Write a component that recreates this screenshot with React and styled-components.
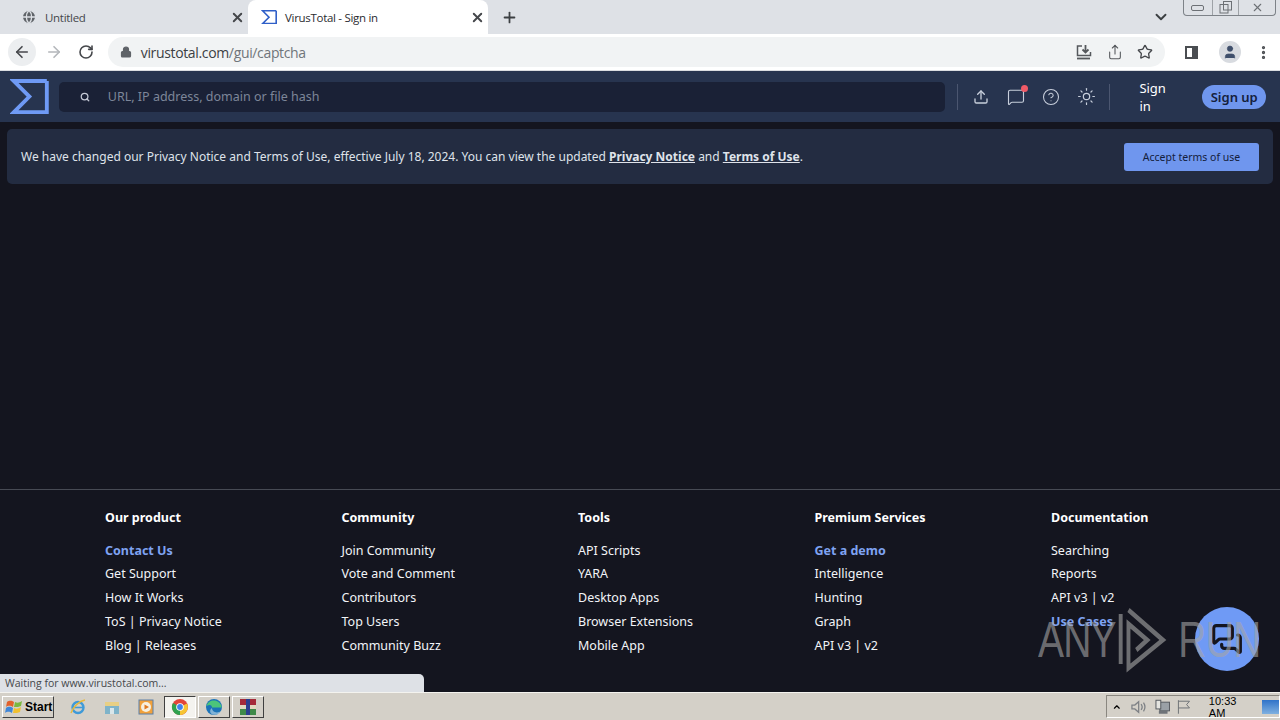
import React from "react";
import styled, { createGlobalStyle } from "styled-components";
import {
  ArrowLeft,
  ArrowRight,
  RotateCw,
  Lock,
  Globe,
  X,
  Plus,
  ChevronDown,
  Star,
  MoreVertical,
  User,
  Search,
  Upload,
  MessageSquare,
  HelpCircle,
  Sun,
  Share,
  MessagesSquare,
} from "lucide-react";

const GlobalStyle = createGlobalStyle`
  html, body {
    margin: 0;
    padding: 0;
    width: 1280px;
    height: 720px;
    overflow: hidden;
    background: #14151f;
  }
  * { box-sizing: border-box; }
`;

const Screen = styled.div`
  position: relative;
  width: 1280px;
  height: 720px;
  display: flex;
  flex-direction: column;
  overflow: hidden;
  font-family: "Noto Sans", sans-serif;
`;

/* browser chrome */
const TabBar = styled.div`
  height: 34px;
  flex: none;
  background: #dee1e6;
  display: flex;
  align-items: flex-end;
  padding-left: 8px;
  position: relative;
`;
const Tab = styled.div`
  width: 240px;
  height: 34px;
  display: flex;
  align-items: center;
  padding: 0 3px 0 13px;
  gap: 8px;
  font-family: "Open Sans", sans-serif;
  font-size: 11.5px;
  letter-spacing: -0.3px;
  color: ${(p) => (p.$active ? "#2b2c30" : "#45474b")};
  background: ${(p) => (p.$active ? "#ffffff" : "transparent")};
  border-radius: 8px 8px 0 0;
  margin-right: ${(p) => (p.$active ? "6px" : "0")};
`;
const TabTitle = styled.span`
  flex: 1;
`;
const NewTab = styled.div`
  width: 30px;
  height: 34px;
  display: flex;
  align-items: center;
  justify-content: center;
  color: #3c4043;
`;
const TabListButton = styled.div`
  position: absolute;
  left: 1152px;
  top: 8px;
  color: #3c4043;
`;
const WindowButtons = styled.div`
  position: absolute;
  left: 1183px;
  top: 0;
  width: 93px;
  height: 16px;
  display: flex;
  border: 1px solid #7d8288;
  border-top: none;
  border-radius: 0 0 4px 4px;
  color: #6c7075;
`;
const WindowButton = styled.div`
  flex: ${(p) => p.$flex || 1};
  display: flex;
  align-items: center;
  justify-content: center;
  & + & {
    border-left: 1px solid #9ea2a7;
  }
`;
const Toolbar = styled.div`
  height: 37px;
  flex: none;
  background: #ffffff;
  display: flex;
  align-items: center;
  padding: 0 8px;
  border-bottom: 1px solid #dadce0;
`;
const NavButton = styled.div`
  width: 28px;
  height: 28px;
  border-radius: 50%;
  display: flex;
  align-items: center;
  justify-content: center;
  margin-right: 4px;
  background: ${(p) => (p.$hover ? "#eceef0" : "transparent")};
  color: ${(p) => p.$color || "#5f6368"};
`;
const Omnibox = styled.div`
  margin-left: 4px;
  width: 1060px;
  height: 30px;
  border-radius: 15px;
  background: #f1f3f4;
  display: flex;
  align-items: center;
  padding: 0 12px 0 12px;
  color: #5f6368;
`;
const Url = styled.span`
  margin-left: 9px;
  flex: 1;
  font-family: "Open Sans", sans-serif;
  font-size: 14px;
  letter-spacing: -0.35px;
  color: #3c4043;
`;
const UrlMuted = styled.span`
  color: #70757a;
`;
const OmniIcons = styled.div`
  display: flex;
  align-items: center;
  gap: 14px;
`;
const SideIcon = styled.div`
  width: 13px;
  height: 13px;
  margin-left: 20px;
  border: 2px solid #4a4d51;
  border-right-width: 6px;
`;
const Avatar = styled.div`
  width: 22px;
  height: 22px;
  margin-left: 21px;
  border-radius: 50%;
  background: #d8dbe0;
  display: flex;
  align-items: center;
  justify-content: center;
  color: #3f4f6b;
`;
const Kebab = styled.div`
  margin-left: 14px;
  color: #4a4d51;
  display: flex;
`;

/* VirusTotal header */
const TopNav = styled.header`
  height: 51px;
  flex: none;
  background: #27344f;
  display: flex;
  align-items: center;
  padding: 0 14px 0 10px;
`;
const SearchBox = styled.div`
  margin-left: 10px;
  width: 892px;
  height: 30px;
  background: #1a2136;
  border-radius: 5px;
  display: flex;
  align-items: center;
  padding-left: 21px;
  gap: 18px;
  color: #c5cad6;
`;
const SearchHint = styled.span`
  font-size: 12.5px;
  color: #7d8699;
`;
const Divider = styled.div`
  width: 1px;
  height: 26px;
  background: #4b5670;
`;
const NavIcons = styled.div`
  display: flex;
  align-items: center;
  gap: 15px;
  padding: 0 13px 0 13px;
  color: #c8cfdc;
`;
const IconWrap = styled.div`
  position: relative;
  width: 20px;
  height: 20px;
  display: flex;
  align-items: center;
  justify-content: center;
`;
const Dot = styled.span`
  position: absolute;
  right: -2px;
  top: -2px;
  width: 7px;
  height: 7px;
  border-radius: 50%;
  background: #ef5a67;
`;
const SignIn = styled.span`
  margin-left: 29px;
  font-size: 13px;
  color: #ffffff;
`;
const SignUp = styled.span`
  margin-left: 22px;
  width: 64px;
  height: 24px;
  border-radius: 12px;
  background: #6f96ee;
  color: #14203c;
  font-size: 13px;
  font-weight: 600;
  display: flex;
  align-items: center;
  justify-content: center;
`;

/* page */
const Page = styled.main`
  flex: 1;
  min-height: 0;
  background: #14151f;
  display: flex;
  flex-direction: column;
  padding-top: 7px;
`;
const Notice = styled.div`
  margin: 0 7px 0 7px;
  height: 55px;
  flex: none;
  border-radius: 5px;
  background: #232c41;
  display: flex;
  align-items: center;
  justify-content: space-between;
  padding: 0 14px;
  font-size: 12px;
  color: #dfe3ea;
`;
const NoticeLink = styled.a`
  font-weight: 700;
  color: #dfe3ea;
  text-decoration: underline;
`;
const AcceptButton = styled.button`
  width: 135px;
  height: 28px;
  border: none;
  border-radius: 3px;
  background: #6f96ee;
  color: #14203c;
  font-family: inherit;
  font-size: 10.5px;
`;
const Spacer = styled.div`
  flex: 1;
`;
const Footer = styled.footer`
  height: 203px;
  flex: none;
  border-top: 1px solid #474a54;
  padding: 18px 0 0 105px;
  display: grid;
  grid-template-columns: repeat(5, 236.5px);
  color: #ffffff;
`;
const Column = styled.div`
  display: flex;
  flex-direction: column;
`;
const ColumnTitle = styled.div`
  font-size: 12.5px;
  font-weight: 700;
  line-height: 20px;
  margin-bottom: 10.5px;
`;
const FooterLink = styled.div`
  font-size: 12.5px;
  line-height: 23.8px;
  white-space: nowrap;
  font-weight: ${(p) => (p.$accent ? 700 : 400)};
  color: ${(p) => (p.$accent ? "#7fa3f2" : "#f2f4f7")};
`;

/* overlays */
const StatusBubble = styled.div`
  position: absolute;
  left: 0;
  top: 674px;
  width: 424px;
  height: 18px;
  background: #dee1e6;
  border-radius: 0 5px 0 0;
  padding-left: 5px;
  font-family: "Open Sans", sans-serif;
  font-size: 10.5px;
  line-height: 18px;
  color: #45474b;
`;
const ChatButton = styled.div`
  position: absolute;
  left: 1195px;
  top: 607px;
  width: 64px;
  height: 64px;
  border-radius: 50%;
  background: #6f9af5;
  display: flex;
  align-items: center;
  justify-content: center;
  color: #14151f;
`;
const Watermark = styled.div`
  position: absolute;
  left: 1038px;
  top: 610px;
  height: 60px;
  display: flex;
  align-items: center;
  font-family: "Liberation Sans", sans-serif;
  font-size: 50px;
  letter-spacing: -1px;
  color: rgba(165, 165, 165, 0.62);
  transform: scaleX(0.78);
  transform-origin: left center;
  pointer-events: none;
  white-space: nowrap;
`;
const WatermarkWord = styled.span``;

/* windows taskbar */
const Taskbar = styled.div`
  height: 28px;
  flex: none;
  background: #d4d0c8;
  border-top: 1px solid #f4f3ef;
  display: flex;
  align-items: center;
  padding-left: 2px;
  font-family: "Liberation Sans", sans-serif;
`;
const StartButton = styled.div`
  width: 52px;
  height: 22px;
  display: flex;
  align-items: center;
  gap: 2px;
  padding-left: 2px;
  border: 1px solid;
  border-color: #ffffff #404040 #404040 #ffffff;
  font-size: 12px;
  font-weight: 700;
  color: #000000;
`;
const Apps = styled.div`
  margin-left: 8px;
  display: flex;
  align-items: center;
  gap: 2px;
`;
const AppSlot = styled.div`
  width: 32px;
  height: 22px;
  display: flex;
  align-items: center;
  justify-content: center;
  border: ${(p) => (p.$raised ? "1px solid" : "none")};
  border-color: ${(p) =>
    p.$pressed ? "#404040 #ffffff #ffffff #404040" : "#ffffff #404040 #404040 #ffffff"};
  background: ${(p) => (p.$pressed ? "#f4f3ef" : "transparent")};
`;
const Tray = styled.div`
  margin-left: auto;
  margin-right: 0;
  width: 174px;
  height: 23px;
  border: 1px solid;
  border-color: #8a8780 #ffffff #ffffff #8a8780;
  display: flex;
  align-items: center;
  padding-left: 5px;
  color: #55595f;
`;
const Clock = styled.span`
  margin-left: 17px;
  font-size: 11px;
  color: #000000;
`;
const ShowDesktop = styled.div`
  margin-left: 8px;
  width: 18px;
  height: 14px;
  background: linear-gradient(#2f73c9, #7fb0e0);
`;

const footerColumns = [
  { title: "Our product", links: [["Contact Us", true], ["Get Support"], ["How It Works"], ["ToS | Privacy Notice"], ["Blog | Releases"]] },
  { title: "Community", links: [["Join Community"], ["Vote and Comment"], ["Contributors"], ["Top Users"], ["Community Buzz"]] },
  { title: "Tools", links: [["API Scripts"], ["YARA"], ["Desktop Apps"], ["Browser Extensions"], ["Mobile App"]] },
  { title: "Premium Services", links: [["Get a demo", true], ["Intelligence"], ["Hunting"], ["Graph"], ["API v3 | v2"]] },
  { title: "Documentation", links: [["Searching"], ["Reports"], ["API v3 | v2"], ["Use Cases", true]] },
];

const Sigma = ({ size, color, width = 6 }) => (
  <svg width={size} height={size * 0.9} viewBox="0 0 40 36" fill="none">
    <path
      d="M38 2H4L20 18L4 34H38V2"
      stroke={color}
      strokeWidth={width * 0.66}
      strokeLinejoin="miter"
    />
  </svg>
);

const Ie = () => (
  <svg width="18" height="18" viewBox="0 0 18 18" fill="none">
    <circle cx="9" cy="9.5" r="5.5" stroke="#3f9ad8" strokeWidth="2.4" />
    <path d="M4 9.5h10" stroke="#3f9ad8" strokeWidth="1.6" />
    <path d="M2 15C4 9 10 3 16 2" stroke="#e8b93c" strokeWidth="1.4" />
  </svg>
);
const Folder = () => (
  <svg width="18" height="18" viewBox="0 0 18 18">
    <rect x="2" y="4" width="14" height="12" fill="#e8cf84" />
    <rect x="2" y="8" width="14" height="8" fill="#7fb3c9" />
    <rect x="7" y="10" width="4" height="6" fill="#d9e6ea" />
  </svg>
);
const Player = () => (
  <svg width="18" height="18" viewBox="0 0 18 18">
    <rect x="2" y="2" width="14" height="14" fill="#f2a13a" stroke="#5a7fa8" />
    <circle cx="9" cy="9" r="5" fill="#f7f0df" />
    <path d="M7.5 6.5L12 9L7.5 11.5Z" fill="#e0781f" />
  </svg>
);
const ChromeIcon = () => (
  <svg width="18" height="18" viewBox="0 0 18 18">
    <circle cx="9" cy="9" r="8" fill="#e2453a" />
    <path d="M9 9L16 5.5A8 8 0 0 1 9 17Z" fill="#f6c533" />
    <path d="M9 9L9 17A8 8 0 0 1 2 5Z" fill="#2fa24f" />
    <circle cx="9" cy="9" r="3.8" fill="#ffffff" />
    <circle cx="9" cy="9" r="2.9" fill="#3f82ee" />
  </svg>
);
const EdgeIcon = () => (
  <svg width="18" height="18" viewBox="0 0 18 18">
    <circle cx="9" cy="9" r="8" fill="#1b73b8" />
    <path d="M1.5 8C3 1 15 0 16.8 9.5H7C7 7 5 6 1.5 8Z" fill="#4cc47a" />
    <path d="M7 10c0 4 5 6 9 3-2 4-7 5-10 2.500C4.500 14 5 11 7 10Z" fill="#e8f4f4" opacity="0.5" />
  </svg>
);
const WinRar = () => (
  <svg width="18" height="18" viewBox="0 0 18 18">
    <rect x="1" y="1" width="16" height="16" fill="#a52a3a" />
    <rect x="1" y="7" width="16" height="4" fill="#e2d8c0" />
    <rect x="1" y="11" width="16" height="6" fill="#3f8a4a" />
    <rect x="7" y="1" width="4" height="16" fill="#2c3f8f" />
  </svg>
);
const StartFlag = () => (
  <svg width="18" height="16" viewBox="0 0 18 16">
    <path d="M2 3C5 1 7 2 9 3L8 8C6 7 4 6 1 8Z" fill="#e2612b" />
    <path d="M10 3C12 4 14 4 17 2L16 7C14 8 12 8 9 8Z" fill="#7ab840" />
    <path d="M1 9C4 7 6 8 8 9L7 14C5 13 3 12 0 14Z" fill="#3f86d8" />
    <path d="M9 9C11 10 13 10 16 8L15 13C13 14 11 14 8 14Z" fill="#f0c030" />
  </svg>
);

function App() {
  return (
    <Screen>
      <GlobalStyle />
      <TabBar>
        <Tab>
          <Globe size={16} color="#5f6368" fill="#5f6368" stroke="#dee1e6" />
          <TabTitle>Untitled</TabTitle>
          <X size={15} color="#45474b" strokeWidth={3} />
        </Tab>
        <Tab $active>
          <Sigma size={16} color="#2f5fc8" />
          <TabTitle>VirusTotal - Sign in</TabTitle>
          <X size={15} color="#45474b" strokeWidth={3} />
        </Tab>
        <NewTab>
          <Plus size={17} strokeWidth={2.5} />
        </NewTab>
        <TabListButton>
          <ChevronDown size={18} strokeWidth={2.5} />
        </TabListButton>
        <WindowButtons>
          <WindowButton $flex={1.1}>
            <svg width="13" height="6" viewBox="0 0 13 6" fill="none">
              <rect x="0.5" y="0.5" width="12" height="5" rx="1.5" stroke="#6c7075" />
            </svg>
          </WindowButton>
          <WindowButton $flex={1}>
            <svg width="14" height="13" viewBox="0 0 14 13" fill="none" stroke="#6c7075">
              <rect x="1" y="3.500" width="8" height="8.500" />
              <rect x="4.500" y="0.500" width="8" height="8.500" />
            </svg>
          </WindowButton>
          <WindowButton $flex={1.4}>
            <X size={13} strokeWidth={2} />
          </WindowButton>
        </WindowButtons>
      </TabBar>
      <Toolbar>
        <NavButton $hover $color="#45474b">
          <ArrowLeft size={18} strokeWidth={2.2} />
        </NavButton>
        <NavButton $color="#b4b7bb">
          <ArrowRight size={18} strokeWidth={2.2} />
        </NavButton>
        <NavButton $color="#45474b">
          <RotateCw size={16} strokeWidth={2.4} />
        </NavButton>
        <Omnibox>
          <Lock size={12} fill="#5f6368" strokeWidth={2.4} />
          <Url>
            virustotal.com<UrlMuted>/gui/captcha</UrlMuted>
          </Url>
          <OmniIcons>
            <svg width="18" height="18" viewBox="0 0 18 18" fill="none" stroke="#55585c" strokeWidth="1.5">
              <path d="M7 3H2.500V12.500H15.500V9" />
              <path d="M10.500 2V9M7.500 6.500L10.500 9.500L13.500 6.500" strokeWidth="1.800" />
              <path d="M2 15.500H15" strokeWidth="1.800" />
            </svg>
            <Share size={16} color="#55585c" strokeWidth={1.6} />
            <Star size={16} color="#45474b" strokeWidth={2} />
          </OmniIcons>
        </Omnibox>
        <SideIcon />
        <Avatar>
          <User size={16} fill="#3f4f6b" strokeWidth={1} />
        </Avatar>
        <Kebab>
          <MoreVertical size={17} strokeWidth={2.6} />
        </Kebab>
      </Toolbar>
      <TopNav>
        <Sigma size={39} color="#6f9af5" width={6} />
        <SearchBox>
          <Search size={10} strokeWidth={3} />
          <SearchHint>URL, IP address, domain or file hash</SearchHint>
        </SearchBox>
        <Divider style={{ marginLeft: 12 }} />
        <NavIcons>
          <IconWrap>
            <Upload size={16} />
          </IconWrap>
          <IconWrap>
            <MessageSquare size={18} strokeWidth={1.5} />
            <Dot />
          </IconWrap>
          <IconWrap>
            <HelpCircle size={18} strokeWidth={1.4} />
          </IconWrap>
          <IconWrap>
            <Sun size={19} strokeWidth={1.5} />
          </IconWrap>
        </NavIcons>
        <Divider />
        <SignIn>Sign in</SignIn>
        <SignUp>Sign up</SignUp>
      </TopNav>
      <Page>
        <Notice>
          <span>
            We have changed our Privacy Notice and Terms of Use, effective July 18, 2024. You can view the updated{" "}
            <NoticeLink>Privacy Notice</NoticeLink> and <NoticeLink>Terms of Use</NoticeLink>.
          </span>
          <AcceptButton>Accept terms of use</AcceptButton>
        </Notice>
        <Spacer />
        <Footer>
          {footerColumns.map((col) => (
            <Column key={col.title}>
              <ColumnTitle>{col.title}</ColumnTitle>
              {col.links.map(([label, accent]) => (
                <FooterLink key={label} $accent={accent}>
                  {label}
                </FooterLink>
              ))}
            </Column>
          ))}
        </Footer>
      </Page>
      <Taskbar>
        <StartButton>
          <StartFlag />
          Start
        </StartButton>
        <Apps>
          <AppSlot><Ie /></AppSlot>
          <AppSlot><Folder /></AppSlot>
          <AppSlot><Player /></AppSlot>
          <AppSlot $raised $pressed><ChromeIcon /></AppSlot>
          <AppSlot $raised><EdgeIcon /></AppSlot>
          <AppSlot $raised><WinRar /></AppSlot>
        </Apps>
        <Tray>
          <ChevronDown size={10} color="#000" style={{ transform: "rotate(180deg)" }} strokeWidth={3} />
          <svg width="18" height="16" viewBox="0 0 18 16" fill="none" stroke="#7d8085" strokeWidth="1.3" style={{ marginLeft: 8 }}>
            <path d="M2 6H5L9 2.500V13.500L5 10H2Z" />
            <path d="M11.500 5C13 7 13 9 11.500 11M14 3.500C16 6.500 16 9.500 14 12.500" />
          </svg>
          <svg width="16" height="16" viewBox="0 0 16 16" style={{ marginLeft: 8 }}>
            <rect x="5" y="3" width="10" height="9" fill="#9aa0a6" stroke="#55595f" />
            <rect x="1" y="1" width="5" height="9" fill="#e4e4e0" stroke="#55595f" />
            <rect x="4" y="12" width="9" height="3" fill="#6f7378" />
          </svg>
          <svg width="16" height="16" viewBox="0 0 16 16" fill="none" stroke="#6c7075" style={{ marginLeft: 6 }}>
            <path d="M2.500 1V15M2.500 2H14L11 5.500L14 9H2.500" />
          </svg>
          <Clock>10:33 AM</Clock>
          <ShowDesktop />
        </Tray>
      </Taskbar>
      <StatusBubble>Waiting for www.virustotal.com...</StatusBubble>
      <ChatButton>
        <MessagesSquare size={32} strokeWidth={2.4} />
      </ChatButton>
      <Watermark>
        <WatermarkWord>ANY</WatermarkWord>
        <svg width="80" height="68" viewBox="0 0 80 68" fill="none" stroke="rgba(165,165,165,0.62)" strokeWidth="5">
          <path d="M6 8V58M16 4L60 34L16 62V18L40 34L26 44" />
        </svg>
        <WatermarkWord>RUN</WatermarkWord>
      </Watermark>
    </Screen>
  );
}

export default App;
